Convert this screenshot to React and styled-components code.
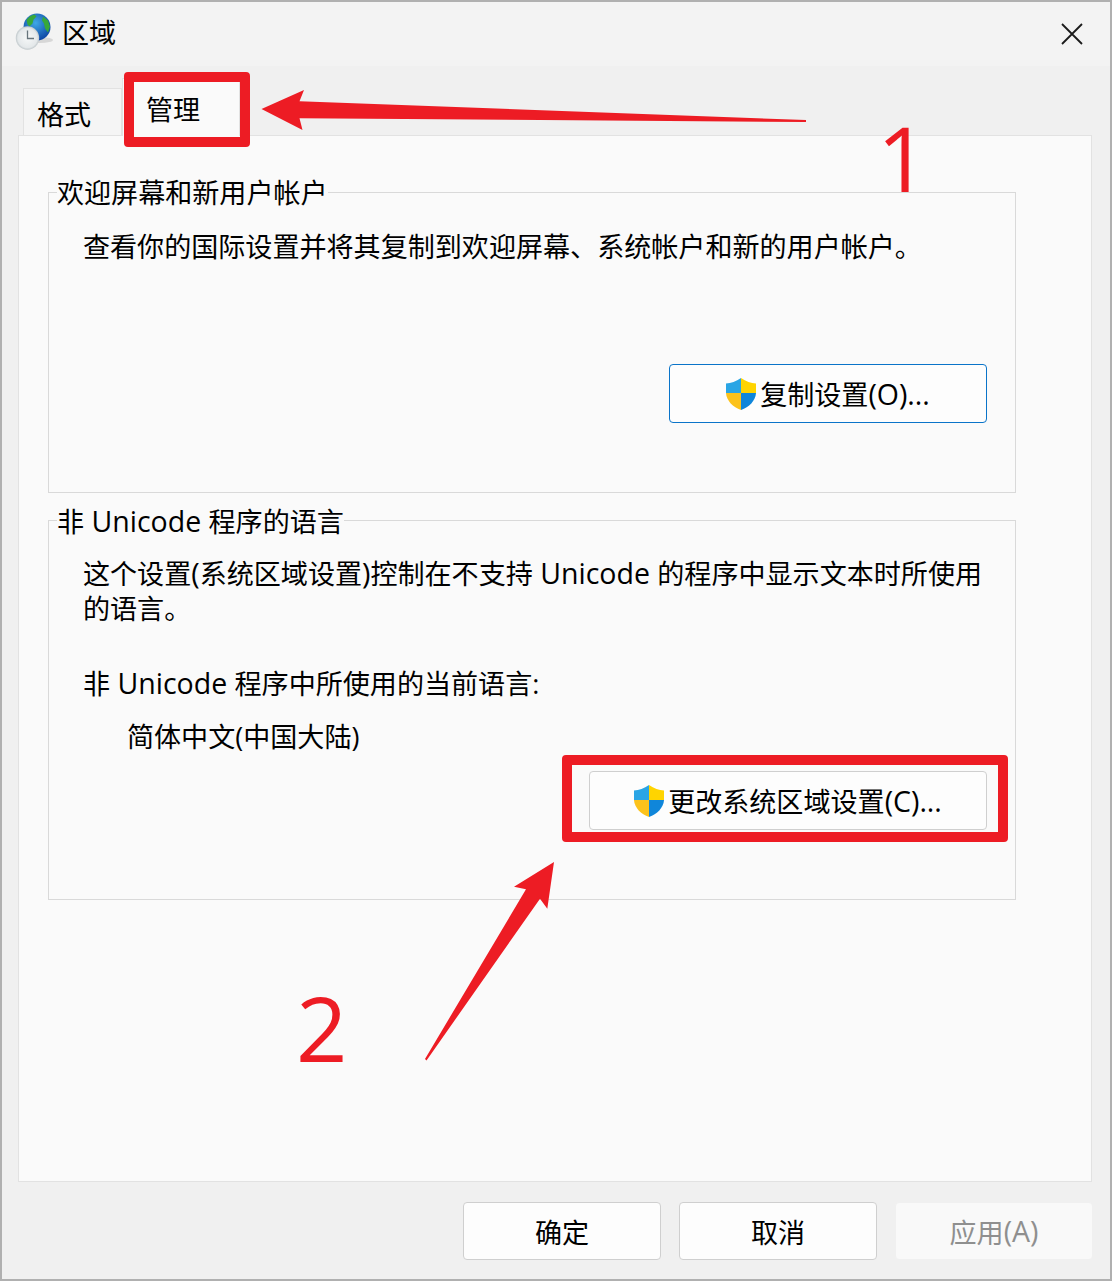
import React from 'react';
import styled, { createGlobalStyle } from 'styled-components';

const Global = createGlobalStyle`
  html, body { margin: 0; padding: 0; background: #f0f0f0; }
  * { box-sizing: border-box; }
`;

const Window = styled.div`
  position: relative;
  width: 1112px;
  height: 1281px;
  border: 2px solid #b0b0b0;
  background: #f0f0f0;
  color: #000;
  font-family: "Open Sans", "Noto Sans CJK SC", sans-serif;
  font-size: 27.07px;
  display: flex;
  flex-direction: column;
  overflow: hidden;
`;

const TitleBar = styled.div`
  height: 64px;
  background: #f3f3f3;
  display: flex;
  align-items: center;
  padding: 0 27px 0 14px;
  flex: none;
`;

const TitleText = styled.div`
  margin-left: 10px;
  line-height: 38px;
  padding-bottom: 2px;
  flex: 1;
`;

const Body = styled.div`
  flex: 1;
  display: flex;
  flex-direction: column;
  padding: 0 18px 0 16px;
`;

const TabStrip = styled.div`
  height: 69px;
  display: flex;
  align-items: flex-end;
  padding-left: 5px;
  flex: none;
  position: relative;
  z-index: 1;
`;

const Tab = styled.div`
  width: ${p => (p.$active ? '118px' : '99px')};
  height: ${p => (p.$active ? '58px' : '47px')};
  margin-bottom: ${p => (p.$active ? '-1px' : '0')};
  padding-left: ${p => (p.$active ? '23px' : '13px')};
  padding-top: ${p => (p.$active ? '12px' : '7px')};
  line-height: 38px;
  background: ${p => (p.$active ? '#fafafa' : '#f5f5f5')};
  border: 1px solid #e2e2e2;
  border-bottom: none;
`;

const Panel = styled.div`
  height: 1047px;
  flex: none;
  background: #fafafa;
  border: 1px solid #e2e2e2;
  padding: 56px 75px 0 29px;
  display: flex;
  flex-direction: column;
  gap: 27px;
`;

const Group = styled.section`
  height: ${p => p.$height}px;
  border: 1px solid #d9d9d9;
  padding: 0 28px 0 34px;
  flex: none;
`;

const GroupTitle = styled.div`
  width: fit-content;
  margin: -19px 0 0 -26px;
  line-height: 38px;
  height: 38px;
  background: #fafafa;
`;

const Text = styled.div`
  line-height: 35px;
  margin-top: ${p => p.$top || 0}px;
  margin-left: ${p => p.$indent || 0}px;
`;

const Latin = styled.span`
  font-size: 28.5px;
`;

const ButtonRow = styled.div`
  display: flex;
  justify-content: flex-end;
  margin-top: ${p => p.$top}px;
`;

const IconButton = styled.div`
  width: ${p => p.$width}px;
  height: 59px;
  background: #fdfdfd;
  border: 1px solid ${p => (p.$focus ? '#0a74c9' : '#cfcfcf')};
  border-radius: 4px;
  display: flex;
  align-items: center;
  justify-content: center;
  gap: 4px;
`;

const Footer = styled.div`
  display: flex;
  justify-content: flex-end;
  gap: 18px;
  margin-top: 20px;
  margin-right: -1px;
`;

const FooterButton = styled.div`
  width: 198px;
  height: 58px;
  border-radius: 4px;
  display: flex;
  align-items: center;
  justify-content: center;
  background: ${p => (p.$disabled ? '#f9f9f9' : '#fdfdfd')};
  border: 1px solid ${p => (p.$disabled ? '#f0f0f0' : '#cfcfcf')};
  color: ${p => (p.$disabled ? '#8f8f8f' : '#000')};
`;

const Overlay = styled.div`
  position: absolute;
  left: -2px;
  top: -2px;
  width: 1112px;
  height: 1281px;
  pointer-events: none;
  z-index: 2;
`;

const Frame = styled.div`
  position: absolute;
  left: ${p => p.$x}px;
  top: ${p => p.$y}px;
  width: ${p => p.$w}px;
  height: ${p => p.$h}px;
  border: 10px solid #ed1c24;
  border-radius: 4px;
`;

const Arrows = styled.svg`
  position: absolute;
  inset: 0;
`;

const Digit = styled.div`
  position: absolute;
  left: ${p => p.$x}px;
  top: ${p => p.$y}px;
  font-family: "Open Sans", sans-serif;
  font-size: 90px;
  line-height: 90px;
  color: #ed1c24;
`;

const Shield = () => (
  <svg width="30" height="32" viewBox="0 0 30 32" style={{ flex: 'none' }}>
    <path d="M15 0C10 3.5 5 5 0 5.5V15H15Z" fill="#2aa5e5" />
    <path d="M15 0C20 3.5 25 5 30 5.5V15H15Z" fill="#ffd400" />
    <path d="M0 15C.5 23 7 29 15 32V15Z" fill="#fcc21b" />
    <path d="M30 15C29.5 23 23 29 15 32V15Z" fill="#0f86da" />
  </svg>
);

const RegionIcon = () => (
  <svg width="36" height="40" viewBox="0 0 36 40" style={{ flex: 'none', overflow: 'visible' }}>
    <defs>
      <radialGradient id="globe" cx="45%" cy="35%" r="70%">
        <stop offset="0" stopColor="#3fa8e6" />
        <stop offset="1" stopColor="#0a3fa0" />
      </radialGradient>
      <radialGradient id="face" cx="50%" cy="50%" r="55%">
        <stop offset="0" stopColor="#f6f8f8" />
        <stop offset="0.75" stopColor="#e4e8ea" />
        <stop offset="1" stopColor="#aab4b8" />
      </radialGradient>
    </defs>
    <ellipse cx="24" cy="26" rx="13" ry="3" fill="#bbb" opacity="0.5" />
    <circle cx="21" cy="13" r="13.5" fill="url(#globe)" />
    <path d="M10.500 6c2-3 5-5 8-5.500l2 2-3 3-1 4-3 3-2-2zM27 2.500l5 4 2 6-2 6-3-4-1-5-2-3z" fill="#37a83a" />
    <circle cx="11.500" cy="24" r="11.700" fill="url(#face)" />
    <path d="M11.500 16.500v8h6.500" fill="none" stroke="#66747c" strokeWidth="1.300" />
  </svg>
);

const CloseIcon = () => (
  <svg width="22" height="22" viewBox="0 0 22 22" style={{ flex: 'none' }}>
    <path d="M1 1L21 21M21 1L1 21" stroke="#1a1a1a" strokeWidth="1.800" fill="none" />
  </svg>
);

export default function App() {
  return (
    <>
      <Global />
      <Window lang="zh-CN">
        <TitleBar>
          <RegionIcon />
          <TitleText>区域</TitleText>
          <CloseIcon />
        </TitleBar>
        <Body>
          <TabStrip>
            <Tab>格式</Tab>
            <Tab $active>管理</Tab>
          </TabStrip>
          <Panel>
            <Group $height={301}>
              <GroupTitle>欢迎屏幕和新用户帐户</GroupTitle>
              <Text $top={17}>查看你的国际设置并将其复制到欢迎屏幕、系统帐户和新的用户帐户。</Text>
              <ButtonRow $top={100}>
                <IconButton $width={318} $focus>
                  <Shield />
                  <span>复制设置<Latin>(O)...</Latin></span>
                </IconButton>
              </ButtonRow>
            </Group>
            <Group $height={380}>
              <GroupTitle>非<Latin> Unicode </Latin>程序的语言</GroupTitle>
              <Text $top={16}>
                这个设置<Latin>(</Latin>系统区域设置<Latin>)</Latin>控制在不支持<Latin> Unicode </Latin>的程序中显示文本时所使用
                <br />
                的语言。
              </Text>
              <Text $top={40}>非<Latin> Unicode </Latin>程序中所使用的当前语言:</Text>
              <Text $top={18} $indent={44}>简体中文(中国大陆)</Text>
              <ButtonRow $top={17}>
                <IconButton $width={398}>
                  <Shield />
                  <span>更改系统区域设置<Latin>(C)...</Latin></span>
                </IconButton>
              </ButtonRow>
            </Group>
          </Panel>
          <Footer>
            <FooterButton>确定</FooterButton>
            <FooterButton>取消</FooterButton>
            <FooterButton $disabled>应用<Latin>(A)</Latin></FooterButton>
          </Footer>
        </Body>
        <Overlay>
          <Frame $x={124} $y={72} $w={126} $h={75} />
          <Frame $x={562} $y={755} $w={446} $h={87} />
          <Arrows width="1112" height="1281" viewBox="0 0 1112 1281">
            <polygon points="261.5,109 304,90 299.5,101.3 806,120 806,122 299.5,118.3 302.5,130" fill="#ed1c24" />
            <polygon points="554,862 514,886.7 526,889.3 425,1059 426.5,1060.5 540,898.7 547.3,908.7" fill="#ed1c24" />
          </Arrows>
          <Digit $x={877} $y={112}>1</Digit>
          <Digit $x={296} $y={982}>2</Digit>
        </Overlay>
      </Window>
    </>
  );
}
